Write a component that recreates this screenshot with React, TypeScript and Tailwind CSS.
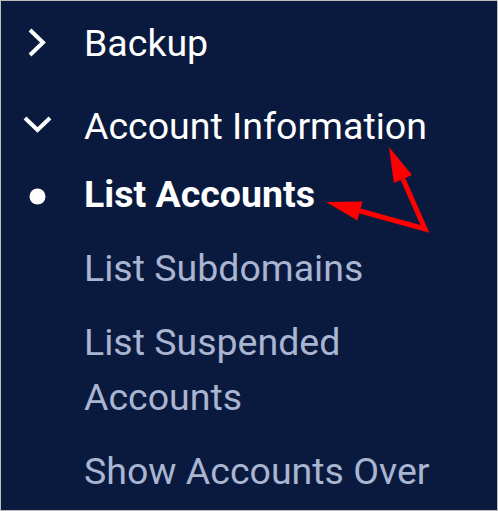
type Item = { label: string; active?: boolean };

const SUB_ITEMS: Item[] = [
  { label: 'List Accounts', active: true },
  { label: 'List Subdomains' },
  { label: 'List Suspended Accounts' },
  { label: 'Show Accounts Over' },
];

function ChevronRight() {
  return (
    <svg width="34" height="55" viewBox="0 0 34 55" fill="none">
      <polyline points="10,14 23,26.5 10,39" stroke="#fff" strokeWidth="4" />
    </svg>
  );
}

function ChevronDown() {
  return (
    <svg width="34" height="55" viewBox="0 0 34 55" fill="none">
      <polyline points="5,19 17.5,31 30,19" stroke="#fff" strokeWidth="4" />
    </svg>
  );
}

function Bullet() {
  return (
    <svg width="34" height="55" viewBox="0 0 34 55">
      <circle cx="17.5" cy="29.5" r="8" fill="#fff" />
    </svg>
  );
}

export default function App() {
  return (
    <div className="relative h-[511px] w-[498px] overflow-hidden border border-[#bdbdbd] bg-[#0a1a3e] font-['Roboto',sans-serif] text-[37.5px] leading-[55px]">
      <div className="flex flex-col pt-[15px] pl-[19px] pr-[20px]">
        <div className="flex items-start gap-[30px] text-white">
          <ChevronRight />
          <span>Backup</span>
        </div>

        <div className="mt-[28px] flex items-start gap-[30px] text-white">
          <ChevronDown />
          <span>Account Information</span>
        </div>

        <div className="mt-[13px] flex flex-col gap-[19px]">
          {SUB_ITEMS.map(item => (
            <div key={item.label} className="flex items-start gap-[30px]">
              <div className="w-[34px] shrink-0">{item.active && <Bullet />}</div>
              <span className={item.active ? 'font-bold text-white' : 'text-[#a9b5d1]'}>{item.label}</span>
            </div>
          ))}
        </div>
      </div>

      {/* annotation arrows */}
      <svg className="pointer-events-none absolute left-0 top-0" width="498" height="511" viewBox="1 1 498 511">
        <polyline points="360,211 425,229 403,179" fill="none" stroke="#ff0000" strokeWidth="5" strokeLinejoin="miter" />
        <polygon points="326,202 362.6,201.4 357.4,220.6" fill="#ff0000" />
        <polygon points="389,147 393.9,183 412,175" fill="#ff0000" />
      </svg>
    </div>
  );
}
